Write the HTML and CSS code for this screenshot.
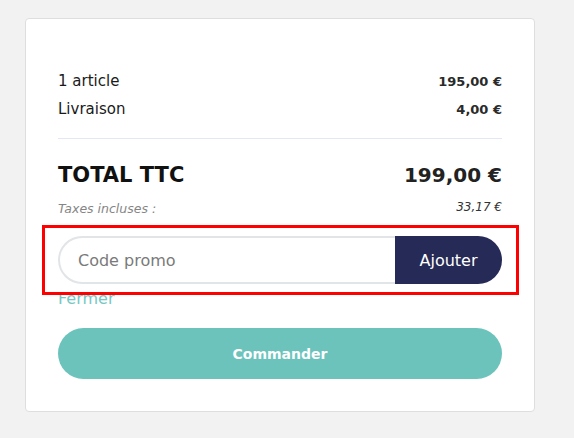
FILE: index.html
```html
<!DOCTYPE html>
<html lang="fr">
<head>
<meta charset="utf-8">
<title>Panier</title>
<link rel="stylesheet" href="styles.css">
</head>
<body>
<div class="card">
  <div class="lines">
    <div class="row">
      <span class="label">1 article</span>
      <span class="value">195,00 €</span>
    </div>
    <div class="row">
      <span class="label">Livraison</span>
      <span class="value">4,00 €</span>
    </div>
  </div>
  <div class="total-row">
    <span class="total-label">TOTAL TTC</span>
    <span class="total-value">199,00 €</span>
  </div>
  <div class="tax-row">
    <span class="tax-label">Taxes incluses :</span>
    <span class="tax-value">33,17 €</span>
  </div>
  <div class="promo">
    <input class="promo-input" type="text" placeholder="Code promo">
    <button class="promo-btn" type="button">Ajouter</button>
    <div class="highlight"></div>
  </div>
  <a class="close-link" href="#">Fermer</a>
  <button class="order-btn" type="button">Commander</button>
</div>
</body>
</html>
```

FILE: styles.css
```css
* { box-sizing: border-box; }
html, body { margin: 0; padding: 0; }
body {
  background: #f2f2f2;
  font-family: "DejaVu Sans", "Liberation Sans", sans-serif;
  color: #1c1c1c;
  width: 574px;
  height: 438px;
  overflow: hidden;
}
.card {
  margin: 18px 0 0 25px;
  width: 510px;
  height: 394px;
  background: #fff;
  border: 1px solid #dedede;
  border-radius: 4px;
  padding: 48px 32px 0 32px;
  display: flex;
  flex-direction: column;
}
.lines {
  border-bottom: 1px solid #e3e6f7;
  padding-bottom: 15px;
}
.row {
  display: flex;
  justify-content: space-between;
  align-items: center;
  height: 28px;
}
.label {
  font-size: 15px;
  font-weight: normal;
  color: #1a1a1a;
}
.value {
  font-size: 13px;
  font-weight: bold;
  color: #2a2a2a;
}
.total-row {
  display: flex;
  justify-content: space-between;
  align-items: center;
  height: 30px;
  margin-top: 21px;
}
.total-label {
  font-size: 21px;
  font-weight: bold;
  color: #111;
}
.total-value {
  font-size: 20px;
  font-weight: bold;
  color: #222;
}
.tax-row {
  display: flex;
  justify-content: space-between;
  align-items: center;
  height: 18px;
  margin-top: 8px;
}
.tax-label {
  font-size: 12.5px;
  font-style: italic;
  font-weight: normal;
  color: #858585;
  margin-top: 3px;
}
.tax-value {
  font-size: 12px;
  font-style: italic;
  color: #333;
}
.promo {
  position: relative;
  display: flex;
  height: 48px;
  margin-top: 20px;
}
.promo-input {
  flex: 1;
  min-width: 0;
  height: 48px;
  border: 2px solid #e2e5e8;
  border-right: none;
  border-radius: 24px 0 0 24px;
  padding: 0 0 0 18px;
  font-family: inherit;
  font-size: 16px;
  font-weight: normal;
  color: #555;
  background: #fff;
  outline: none;
}
.promo-input::placeholder { color: #7a7a7a; }
.promo-btn {
  width: 107px;
  height: 48px;
  border: none;
  border-radius: 0 24px 24px 0;
  background: #262a56;
  color: #fff;
  font-family: inherit;
  font-size: 16px;
  font-weight: normal;
  padding: 0;
}
.highlight {
  position: absolute;
  left: -16px;
  top: -11px;
  right: -17px;
  bottom: -11px;
  border: 3px solid #ff0000;
  pointer-events: none;
}
.close-link {
  display: block;
  font-size: 16px;
  font-weight: normal;
  line-height: 20px;
  color: #78c8c2;
  text-decoration: none;
  margin-top: 5px;
  align-self: flex-start;
}
.order-btn {
  margin-top: 19px;
  height: 51px;
  border: none;
  border-radius: 26px;
  background: #6cc3bc;
  color: #fff;
  font-family: inherit;
  font-size: 14px;
  font-weight: bold;
  padding: 0;
}
```
